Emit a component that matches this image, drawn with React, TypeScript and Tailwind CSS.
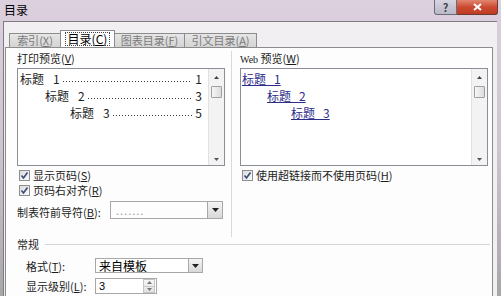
import React from "react";

const F = "font-['Noto_Sans_CJK_SC','Noto_Sans',sans-serif]";

function Acc({ k }: { k: string }) {
  return (
    <span>
      (<span className="underline">{k}</span>)
    </span>
  );
}

function Check() {
  return (
    <span className="w-[11px] h-[11px] border border-[#8e8f8f] bg-gradient-to-br from-[#dcdcdc] to-[#fbfbfb] flex items-center justify-center shrink-0">
      <svg width="9" height="9" viewBox="0 0 9 9">
        <path d="M1.5 4.5 L3.5 7 L7.5 1.5" fill="none" stroke="#3a4a78" strokeWidth="1.6" />
      </svg>
    </span>
  );
}

function TriDown() {
  return (
    <svg width="7" height="4" viewBox="0 0 7 4">
      <path d="M0 0 H7 L3.5 4 Z" fill="#222" />
    </svg>
  );
}

function TriUp({ c = "#444" }: { c?: string }) {
  return (
    <svg width="5" height="3" viewBox="0 0 5 3">
      <path d="M0 3 H5 L2.5 0 Z" fill={c} />
    </svg>
  );
}

function ScrollBar() {
  return (
    <div className="w-[16px] shrink-0 border-l border-[#e2e2e2] bg-[#f3f3f3] flex flex-col items-center">
      <div className="h-[14px] flex items-center justify-center pt-[2px]">
        <TriUp />
      </div>
      <div className="mt-[3px] w-[11px] h-[12px] border border-[#a0a0a0] rounded-[1px] bg-gradient-to-r from-[#f6f6f6] to-[#dcdcdc]" />
      <div className="flex-1" />
      <div className="h-[12px] flex items-center justify-center">
        <svg width="5" height="3" viewBox="0 0 5 3">
          <path d="M0 0 H5 L2.5 3 Z" fill="#555" />
        </svg>
      </div>
    </div>
  );
}

function TocLine({ indent, num, page }: { indent: number; num: string; page: string }) {
  return (
    <div className="flex h-[17px] items-center text-[12px] leading-[17px] text-[#222] pr-[6px]" style={{ paddingLeft: indent }}>
      <span className="whitespace-nowrap shrink-0">标题</span>
      <span className="whitespace-nowrap shrink-0 ml-[9px]">{num}</span>
      <div className="flex-1 min-w-0 self-end mb-[5px] mx-[3px] h-[1px] bg-[linear-gradient(to_right,#3a3a3a_1px,transparent_1px)] bg-[length:3px_1px] bg-repeat-x" />
      <span className="shrink-0">{page}</span>
    </div>
  );
}

function WebLine({ indent, num }: { indent: number; num: string }) {
  return (
    <div className="h-[17px] flex items-center text-[12px] leading-[17px]" style={{ paddingLeft: indent }}>
      <span className="underline text-[#2c2c8a] whitespace-pre">{"标题   " + num}</span>
    </div>
  );
}

export default function App() {
  return (
    <div className={`w-[501px] h-[296px] overflow-hidden flex flex-col bg-gradient-to-b from-[#dccfde] via-[#cdc5cf] to-[#a9a6aa] ${F} text-[11px] text-[#1c1c1c]`}>
      {/* title bar */}
      <div className="h-[21px] flex items-start shrink-0">
        <span className="pl-[4px] pt-[3px] text-[12px] leading-[14px] text-black">目录</span>
        <div className="ml-auto mr-[3px] flex">
          <div className="w-[23px] h-[15px] border border-[#6c6c78] border-t-0 rounded-bl-[3px] bg-gradient-to-b from-[#d7d5e2] to-[#b9b8c8] flex items-center justify-center text-[11px] leading-none text-[#444] font-bold">
            ?
          </div>
          <div className="w-[41px] h-[15px] border border-[#6c3a30] border-t-0 border-l-0 rounded-br-[3px] bg-gradient-to-b from-[#e08670] via-[#cc4a32] to-[#c03a22] flex items-center justify-center">
            <svg width="9" height="8" viewBox="0 0 9 8">
              <path d="M1 1 L8 7 M8 1 L1 7" stroke="#fff" strokeWidth="2" />
            </svg>
          </div>
        </div>
      </div>

      {/* client */}
      <div className="flex-1 ml-[3px] w-[494px] border-l border-t border-[#7d7a80] bg-[#f2eff3] flex flex-col pr-[4px]">
        {/* tabs */}
        <div className="flex items-end h-[25px] pl-[5px] shrink-0">
          <div className="h-[14px] w-[52px] border border-b-0 border-[#8c8c8c] bg-gradient-to-b from-[#e6e6e6] to-[#d4d4d4] flex items-center justify-center text-[#7a7a7a] leading-none">
            索引<Acc k="X" />
          </div>
          <div className="h-[17px] w-[55px] border border-b-0 border-[#8c8c8c] bg-white flex items-center justify-center -ml-[1px] relative z-10">
            <span className="border border-dotted border-[#444] px-[2px] leading-[12px] text-[12px] text-black">
              目录<Acc k="C" />
            </span>
          </div>
          <div className="h-[14px] w-[70px] border border-b-0 border-l-0 border-[#8c8c8c] bg-gradient-to-b from-[#e6e6e6] to-[#d4d4d4] flex items-center justify-center text-[#7a7a7a] leading-none">
            图表目录<Acc k="F" />
          </div>
          <div className="h-[14px] w-[72px] border border-b-0 border-l-0 border-[#8c8c8c] bg-gradient-to-b from-[#e6e6e6] to-[#d4d4d4] flex items-center justify-center text-[#7a7a7a] leading-none">
            引文目录<Acc k="A" />
          </div>
        </div>

        {/* panel */}
        <div className="flex-1 ml-[1px] border border-[#8c8c8c] border-b-0 bg-[#fdfdfd] flex flex-col">
          <div className="flex h-[189px] pt-[3px]">
            {/* left column */}
            <div className="w-[226px] border-r border-[#d8d8d8] pl-[11px] flex flex-col">
              <div className="h-[14px] leading-[14px]">打印预览<Acc k="V" /></div>
              <div className="mt-[3px] w-[208px] h-[98px] border border-[#8a8e96] flex bg-white">
                <div className="flex-1 min-w-0 pt-[1px] pl-[2px]">
                  <TocLine indent={0} num="1" page="1" />
                  <TocLine indent={25} num="2" page="3" />
                  <TocLine indent={50} num="3" page="5" />
                </div>
                <ScrollBar />
              </div>
              <div className="mt-[2px] h-[14px] flex items-center gap-[3px] pl-[2px]">
                <Check />
                <span className="leading-[14px]">显示页码<Acc k="S" /></span>
              </div>
              <div className="mt-[1px] h-[14px] flex items-center gap-[3px] pl-[2px]">
                <Check />
                <span className="leading-[14px]">页码右对齐<Acc k="R" /></span>
              </div>
              <div className="mt-[4px] h-[18px] flex items-center">
                <span className="w-[93px] leading-[14px] pt-[3px]">制表符前导符<Acc k="B" />:</span>
                <div className="w-[113px] h-[18px] border border-[#a8a8a8] flex items-center">
                  <span className="flex-1 pl-[5px] text-[#a0a0a0] tracking-[1px] leading-none">.......</span>
                  <div className="w-[15px] h-[16px] border-l border-[#a8a8a8] bg-gradient-to-b from-[#f4f4f4] to-[#d8d8d8] flex items-center justify-center">
                    <TriDown />
                  </div>
                </div>
              </div>
            </div>

            {/* right column */}
            <div className="flex-1 pl-[8px] flex flex-col">
              <div className="h-[14px] leading-[14px]">
                <span className="font-['Liberation_Serif',serif] text-[10px]">Web</span> 预览<Acc k="W" />
              </div>
              <div className="mt-[3px] w-[248px] h-[98px] border border-[#8a8e96] flex bg-white">
                <div className="flex-1 min-w-0 pt-[1px] pl-[1px]">
                  <WebLine indent={0} num="1" />
                  <WebLine indent={25} num="2" />
                  <WebLine indent={49} num="3" />
                </div>
                <ScrollBar />
              </div>
              <div className="mt-[2px] h-[14px] flex items-center gap-[3px] pl-[2px]">
                <Check />
                <span className="leading-[14px]">使用超链接而不使用页码<Acc k="H" /></span>
              </div>
            </div>
          </div>

          {/* general */}
          <div className="pl-[11px] pr-[2px] flex items-center h-[12px] mt-[1px]">
            <span className="text-[11px] leading-[12px]">常规</span>
            <div className="flex-1 ml-[6px] h-[1px] bg-[#d5d5d5]" />
          </div>
          <div className="pl-[20px] mt-[8px] h-[15px] flex items-center">
            <span className="w-[69px] leading-[14px]">格式<Acc k="T" />:</span>
            <div className="w-[108px] h-[15px] border border-[#a8a8a8] flex items-center bg-white">
              <span className="flex-1 pl-[3px] text-[12px] leading-none text-black">来自模板</span>
              <div className="w-[14px] h-[13px] border-l border-[#a8a8a8] bg-gradient-to-b from-[#f4f4f4] to-[#d8d8d8] flex items-center justify-center">
                <TriDown />
              </div>
            </div>
          </div>
          <div className="pl-[20px] mt-[5px] h-[16px] flex items-center">
            <span className="w-[69px] leading-[14px]">显示级别<Acc k="L" />:</span>
            <div className="w-[62px] h-[16px] border border-[#a8a8a8] flex items-center bg-white">
              <span className="flex-1 pl-[3px] text-[11px] leading-none text-black font-['Liberation_Sans',sans-serif]">3</span>
              <div className="w-[12px] h-[14px] mr-[1px] flex flex-col border border-[#c4c4c4] bg-gradient-to-b from-[#f6f6f6] to-[#e2e2e2]">
                <div className="flex-1 flex items-center justify-center border-b border-[#c8c8c8]">
                  <TriUp c="#777" />
                </div>
                <div className="flex-1 flex items-center justify-center">
                  <svg width="5" height="3" viewBox="0 0 5 3">
                    <path d="M0 0 H5 L2.5 3 Z" fill="#777" />
                  </svg>
                </div>
              </div>
            </div>
          </div>
        </div>
      </div>
    </div>
  );
}
